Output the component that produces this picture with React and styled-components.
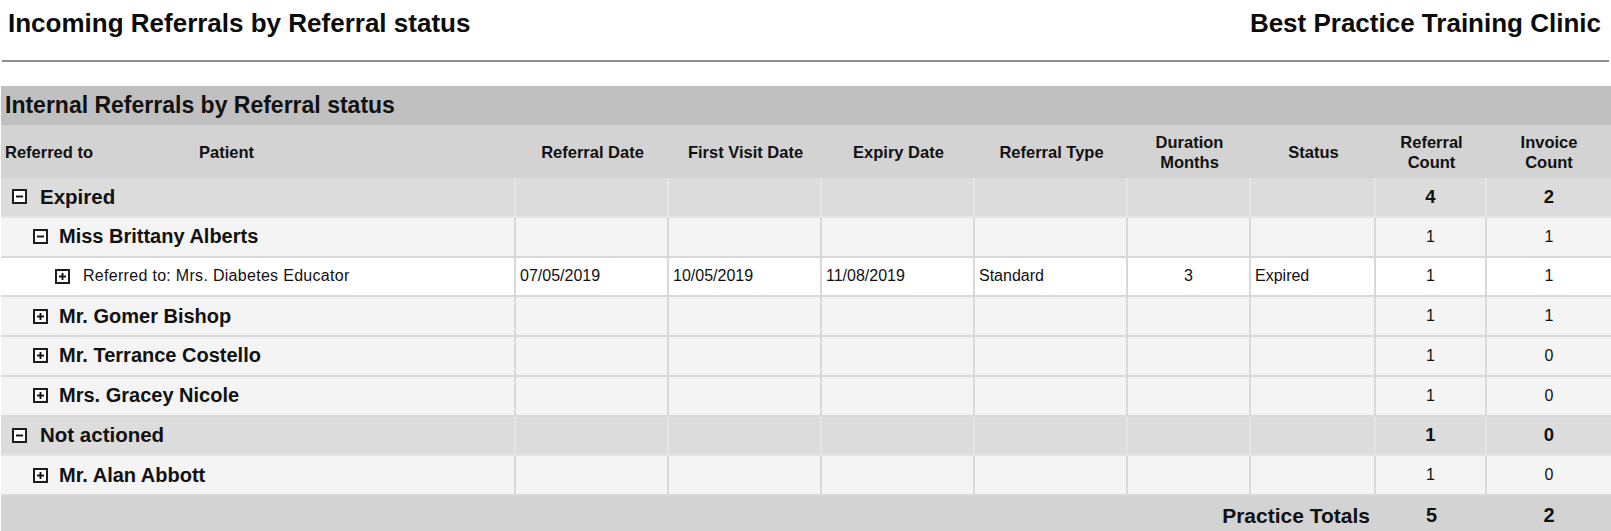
import React from "react";
import styled, { createGlobalStyle, css } from "styled-components";

const COLUMNS = "515px 153px 153px 153px 153px 123px 125px 111px 1fr";

const GlobalStyle = createGlobalStyle`
  html, body {
    margin: 0;
    padding: 0;
    background: #ffffff;
  }
  body {
    font-family: "Liberation Sans", Arial, sans-serif;
    color: #111;
    overflow: hidden;
  }
`;

const Page = styled.div`
  width: 1611px;
  height: 531px;
  overflow: hidden;
`;

const TopBar = styled.header`
  height: 46px;
  display: flex;
  align-items: center;
  justify-content: space-between;
  padding: 0 10px 0 8px;
`;

const ReportTitle = styled.h1`
  margin: 0;
  font-size: 26px;
  font-weight: 700;
  color: #0c0c0c;
`;

const ClinicName = styled.div`
  font-size: 26px;
  font-weight: 700;
  color: #0c0c0c;
`;

const Rule = styled.hr`
  margin: 14px 2px 0 2px;
  border: 0;
  border-top: 2px solid #8e8e8e;
`;

const Report = styled.section`
  margin: 24px 0 0 1px;
`;

const SectionBand = styled.div`
  height: 39px;
  display: flex;
  align-items: center;
  padding-left: 4px;
  background: #c0c0c0;
  font-size: 23px;
  font-weight: 700;
  color: #111;
`;

const HeaderRow = styled.div`
  display: grid;
  grid-template-columns: ${COLUMNS};
  height: 53px;
  background: #d3d3d3;
`;

const HeadCell = styled.div`
  display: flex;
  align-items: center;
  justify-content: ${(p) => (p.$left ? "flex-start" : "center")};
  text-align: ${(p) => (p.$left ? "left" : "center")};
  font-size: 16.5px;
  font-weight: 700;
  line-height: 20px;
  color: #111;
`;

const HeadSplit = styled.span`
  width: ${(p) => p.$width || "auto"};
  padding-left: ${(p) => p.$pad || "0"};
  box-sizing: border-box;
`;

const rowTheme = {
  group: { bg: "#dcdcdc", line: "#e5e5e5" },
  patient: { bg: "#f4f4f4", line: "#d9d9d9" },
  detail: { bg: "#ffffff", line: "#d9d9d9" },
};

const Row = styled.div`
  display: grid;
  grid-template-columns: ${COLUMNS};
  height: 39.75px;
  box-sizing: border-box;
  background: ${(p) => rowTheme[p.$kind].bg};
  border-bottom: 2px solid ${(p) => rowTheme[p.$kind].line};

  & > div {
    border-right: 2px solid ${(p) => rowTheme[p.$kind].line};
  }
  & > div:last-child {
    border-right: 0;
  }
`;

const Cell = styled.div`
  display: flex;
  align-items: center;
  justify-content: ${(p) => (p.$center ? "center" : "flex-start")};
  padding-left: ${(p) => (p.$center ? "0" : "4px")};
  font-size: 16px;
  color: #111;
  min-width: 0;
  ${(p) =>
    p.$bold &&
    css`
      font-size: 18.5px;
      font-weight: 700;
    `}
`;

const NameCell = styled.div`
  display: flex;
  align-items: center;
  gap: ${(p) => (p.$kind === "patient" ? "11px" : "13px")};
  padding-left: ${(p) => p.$indent}px;
  white-space: nowrap;
  ${(p) =>
    p.$kind === "detail"
      ? css`
          font-size: 16px;
          font-weight: 400;
          letter-spacing: 0.3px;
        `
      : css`
          font-size: ${p.$kind === "group" ? "20.5px" : "20px"};
          font-weight: 700;
        `}
`;

const Toggle = styled.svg`
  flex: none;
  display: block;
`;

const TotalsRow = styled.div`
  display: grid;
  grid-template-columns: ${COLUMNS};
  height: 39.5px;
  background: #d3d3d3;
  font-weight: 700;
  font-size: 20px;
`;

const TotalsLabel = styled.div`
  grid-column: 1 / 8;
  display: flex;
  align-items: center;
  justify-content: flex-end;
  padding-right: 6px;
  font-size: 21px;
`;

const TotalsValue = styled.div`
  display: flex;
  align-items: center;
  justify-content: center;
`;

const ToggleIcon = ({ open }) => (
  <Toggle width="15" height="15" viewBox="0 0 15 15">
    <rect x="1" y="1" width="13" height="13" fill="#fff" stroke="#111" strokeWidth="1.9" />
    <line x1="4" y1="7.5" x2="11" y2="7.5" stroke="#111" strokeWidth="1.9" />
    {!open && <line x1="7.5" y1="4" x2="7.5" y2="11" stroke="#111" strokeWidth="1.9" />}
  </Toggle>
);

const indents = { group: 11, patient: 32, detail: 54 };

const rows = [
  { kind: "group", name: "Expired", open: true, refCount: 4, invCount: 2 },
  { kind: "patient", name: "Miss Brittany Alberts", open: true, refCount: 1, invCount: 1 },
  {
    kind: "detail",
    name: "Referred to: Mrs. Diabetes Educator",
    open: false,
    referralDate: "07/05/2019",
    firstVisit: "10/05/2019",
    expiry: "11/08/2019",
    type: "Standard",
    duration: "3",
    status: "Expired",
    refCount: 1,
    invCount: 1,
  },
  { kind: "patient", name: "Mr. Gomer Bishop", open: false, refCount: 1, invCount: 1 },
  { kind: "patient", name: "Mr. Terrance Costello", open: false, refCount: 1, invCount: 0 },
  { kind: "patient", name: "Mrs. Gracey Nicole", open: false, refCount: 1, invCount: 0 },
  { kind: "group", name: "Not actioned", open: true, refCount: 1, invCount: 0 },
  { kind: "patient", name: "Mr. Alan Abbott", open: false, refCount: 1, invCount: 0 },
];

const ReferralRow = ({ row }) => {
  const bold = row.kind === "group";
  return (
    <Row $kind={row.kind}>
      <NameCell $kind={row.kind} $indent={indents[row.kind]}>
        <ToggleIcon open={row.open} />
        <span>{row.name}</span>
      </NameCell>
      <Cell>{row.referralDate}</Cell>
      <Cell>{row.firstVisit}</Cell>
      <Cell>{row.expiry}</Cell>
      <Cell>{row.type}</Cell>
      <Cell $center>{row.duration}</Cell>
      <Cell>{row.status}</Cell>
      <Cell $center $bold={bold}>{row.refCount}</Cell>
      <Cell $center $bold={bold}>{row.invCount}</Cell>
    </Row>
  );
};

export default function App() {
  return (
    <Page>
      <GlobalStyle />
      <TopBar>
        <ReportTitle>Incoming Referrals by Referral status</ReportTitle>
        <ClinicName>Best Practice Training Clinic</ClinicName>
      </TopBar>
      <Rule />
      <Report>
        <SectionBand>Internal Referrals by Referral status</SectionBand>
        <HeaderRow>
          <HeadCell $left>
            <HeadSplit $width="198px" $pad="4px">Referred to</HeadSplit>
            <HeadSplit>Patient</HeadSplit>
          </HeadCell>
          <HeadCell>Referral Date</HeadCell>
          <HeadCell>First Visit Date</HeadCell>
          <HeadCell>Expiry Date</HeadCell>
          <HeadCell>Referral Type</HeadCell>
          <HeadCell>
            Duration
            <br />
            Months
          </HeadCell>
          <HeadCell>Status</HeadCell>
          <HeadCell>
            Referral
            <br />
            Count
          </HeadCell>
          <HeadCell>
            Invoice
            <br />
            Count
          </HeadCell>
        </HeaderRow>
        {rows.map((row) => (
          <ReferralRow key={row.name} row={row} />
        ))}
        <TotalsRow>
          <TotalsLabel>Practice Totals</TotalsLabel>
          <TotalsValue>5</TotalsValue>
          <TotalsValue>2</TotalsValue>
        </TotalsRow>
      </Report>
    </Page>
  );
}
